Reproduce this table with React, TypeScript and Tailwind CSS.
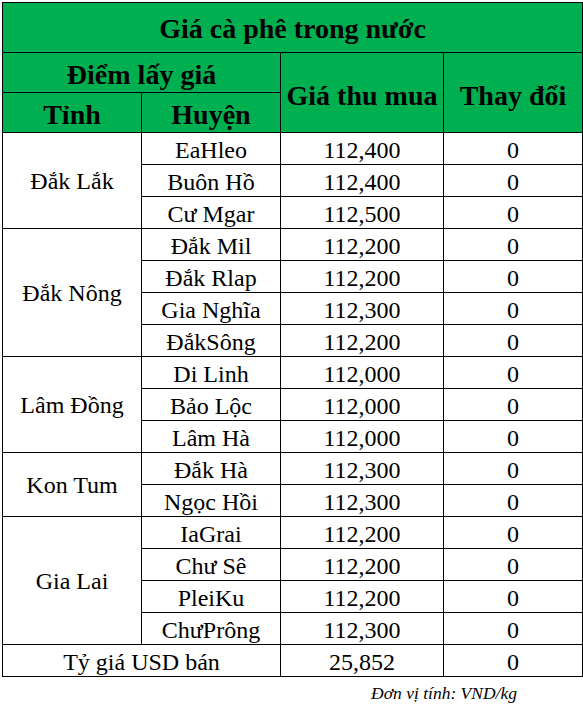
const groups: { province: string; rows: [string, string, string][] }[] = [
  {
    province: 'Đắk Lắk',
    rows: [
      ['EaHleo', '112,400', '0'],
      ['Buôn Hồ', '112,400', '0'],
      ['Cư Mgar', '112,500', '0'],
    ],
  },
  {
    province: 'Đắk Nông',
    rows: [
      ['Đắk Mil', '112,200', '0'],
      ['Đắk Rlap', '112,200', '0'],
      ['Gia Nghĩa', '112,300', '0'],
      ['ĐắkSông', '112,200', '0'],
    ],
  },
  {
    province: 'Lâm Đồng',
    rows: [
      ['Di Linh', '112,000', '0'],
      ['Bảo Lộc', '112,000', '0'],
      ['Lâm Hà', '112,000', '0'],
    ],
  },
  {
    province: 'Kon Tum',
    rows: [
      ['Đắk Hà', '112,300', '0'],
      ['Ngọc Hồi', '112,300', '0'],
    ],
  },
  {
    province: 'Gia Lai',
    rows: [
      ['IaGrai', '112,200', '0'],
      ['Chư Sê', '112,200', '0'],
      ['PleiKu', '112,200', '0'],
      ['ChưPrông', '112,300', '0'],
    ],
  },
];

const cell = 'border border-black text-center align-middle p-0 leading-none';

export default function App() {
  return (
    <div className="min-h-[708px] bg-white pt-[2px] pl-[2px] text-black font-['Liberation_Serif']">
      <table className="border-collapse table-fixed w-[580px] font-['Liberation_Serif'] text-black">
        <colgroup>
          <col className="w-[139px]" />
          <col className="w-[139px]" />
          <col className="w-[163px]" />
          <col className="w-[139px]" />
        </colgroup>
        <thead className="bg-[#00b050] font-bold">
          <tr className="h-[50px]">
            <th colSpan={4} className={`${cell} text-[28px] pt-[2px]`}>
              Giá cà phê trong nước
            </th>
          </tr>
          <tr className="h-[40px]">
            <th colSpan={2} className={`${cell} text-[28px] pt-[4px]`}>
              Điểm lấy giá
            </th>
            <th rowSpan={2} className={`${cell} text-[28px] pt-[6px]`}>
              Giá thu mua
            </th>
            <th rowSpan={2} className={`${cell} text-[28px] pt-[6px]`}>
              Thay đổi
            </th>
          </tr>
          <tr className="h-[40px]">
            <th className={`${cell} text-[28px] pt-[4px]`}>Tỉnh</th>
            <th className={`${cell} text-[28px] pt-[4px]`}>Huyện</th>
          </tr>
        </thead>
        <tbody className="text-[24px]">
          {groups.map((g) =>
            g.rows.map((r, i) => (
              <tr key={g.province + r[0]} className="h-[32px]">
                {i === 0 && (
                  <td rowSpan={g.rows.length} className={cell}>
                    {g.province}
                  </td>
                )}
                <td className={`${cell} pt-[2px]`}>{r[0]}</td>
                <td className={`${cell} pt-[2px]`}>{r[1]}</td>
                <td className={`${cell} pt-[2px]`}>{r[2]}</td>
              </tr>
            ))
          )}
          <tr className="h-[32px]">
            <td colSpan={2} className={`${cell} pt-[2px]`}>
              Tỷ giá USD bán
            </td>
            <td className={`${cell} pt-[2px]`}>25,852</td>
            <td className={`${cell} pt-[2px]`}>0</td>
          </tr>
        </tbody>
      </table>
      <div className="w-[515px] text-right italic text-[17.5px] mt-[3px]">Đơn vị tính: VND/kg</div>
    </div>
  );
}
